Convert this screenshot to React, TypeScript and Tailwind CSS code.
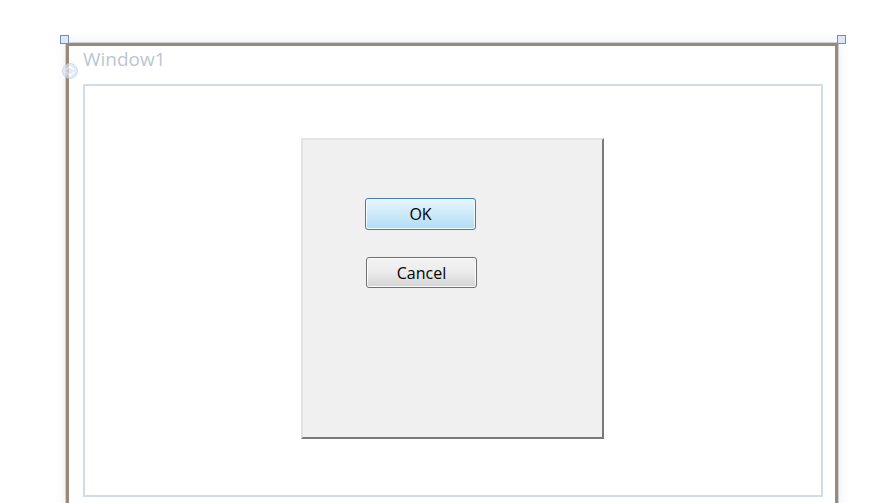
import React from 'react'

// Faded window icon in the title bar
function WindowIcon() {
  return (
    <svg width="18" height="18" viewBox="0 0 18 18" className="opacity-70">
      <circle cx="9" cy="9" r="7.5" fill="#d6e3f2" stroke="#b9cde4" strokeWidth="1" />
      <path d="M5 8 L9 4.5 L13 8" fill="none" stroke="#ffffff" strokeWidth="1.6" />
      <path d="M5 10 L9 13.5 L13 10" fill="none" stroke="#ffffff" strokeWidth="1.6" />
    </svg>
  )
}

function Handle({ className }: { className: string }) {
  return <div className={`absolute w-[9px] h-[9px] border border-[#6f8fb5] bg-[#dce8f5] ${className}`} />
}

export default function App() {
  return (
    <div className="w-[869px] h-[503px] overflow-hidden bg-white relative" style={{ fontFamily: '"Open Sans", "Liberation Sans", sans-serif' }}>
      <div className="pt-[43px] pl-[66px]">
        <div className="w-[772px] h-[470px] border-[3px] border-b-0 border-[#9c8a76] bg-white shadow-[0_0_0_1px_#c6d0dc,0_0_12px_rgba(0,0,0,0.08)] relative">
          {/* title */}
          <div className="h-[38px] flex items-start pl-[14px] pt-[1px]">
            <span className="text-[19px] leading-[24px] text-[#bec5ce]">Window1</span>
          </div>
          <div className="absolute left-[-8px] top-[16px]">
            <WindowIcon />
          </div>
          {/* client area */}
          <div className="ml-[14px] w-[740px] h-[413px] border-[2px] border-[#d0dce8] bg-white">
            <div className="pt-[52px] pl-[216px]">
              <div className="w-[303px] h-[301px] bg-[#f0f0f0] border-[2px] border-t-[#e3e3e3] border-l-[#e3e3e3] border-r-[#7a7a7a] border-b-[#7a7a7a]">
                <div className="pt-[58px] pl-[62px] flex flex-col gap-[27px]">
                  <button className="w-[111px] h-[32px] rounded-[3px] border border-[#3c7fb1] bg-gradient-to-b from-[#e8f6fd] to-[#b2dcf6] shadow-[inset_0_0_0_1px_#f4fbff] text-[16px] text-black leading-none">
                    OK
                  </button>
                  <button className="w-[111px] h-[31px] ml-[1px] rounded-[3px] border border-[#707070] bg-gradient-to-b from-[#f3f3f3] via-[#ebebeb] to-[#d4d4d4] shadow-[inset_0_0_0_1px_#fcfcfc] text-[16px] text-black leading-none">
                    Cancel
                  </button>
                </div>
              </div>
            </div>
          </div>
        </div>
      </div>
      <Handle className="left-[60px] top-[35px]" />
      <Handle className="left-[837px] top-[35px]" />
    </div>
  )
}
